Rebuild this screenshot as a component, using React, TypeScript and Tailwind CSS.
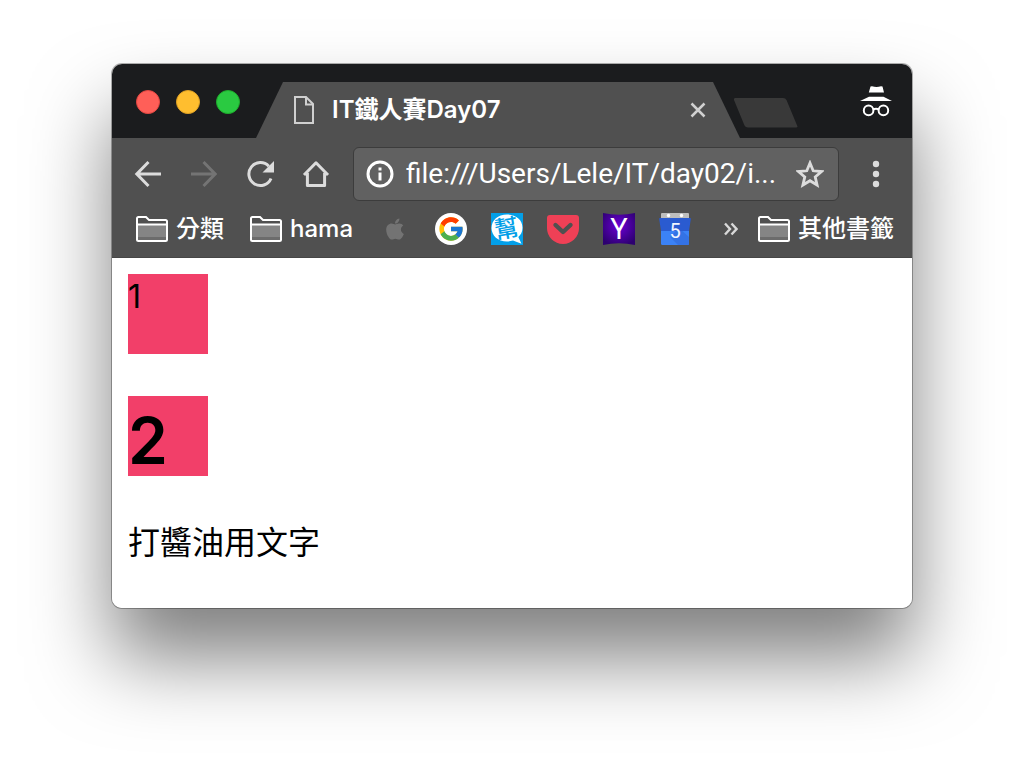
import type { ReactNode } from 'react'
import { FaApple } from 'react-icons/fa'
import { FcGoogle } from 'react-icons/fc'

function FileIcon() {
  return (
    <svg viewBox="0 0 20 28" className="h-7 w-5 shrink-0" fill="none" stroke="#d0d0d0" strokeWidth="2" aria-hidden="true">
      <path d="M1 1h11l7 7v19H1z" />
      <path d="M12 1v7.5h7" />
    </svg>
  )
}

function IncognitoIcon() {
  return (
    <svg viewBox="0 0 32 32" className="size-8" fill="#fff" aria-hidden="true">
      <path d="M10.5 0.5 L12 0.2 Q16.5 1.8 21 0.2 L22.5 0.5 L24 6.5 H8.8z" />
      <path d="M9 10.8h14.5L32 15H0z" />
      <g fill="none" stroke="#fff" strokeWidth="2">
        <circle cx="8.6" cy="24.4" r="4.8" />
        <circle cx="23.4" cy="24.4" r="4.8" />
        <path d="M13 23.6q3-1.6 6 0" />
      </g>
    </svg>
  )
}

function BackIcon() {
  return (
    <svg viewBox="0 0 28 28" className="size-7" fill="none" stroke="currentColor" strokeWidth="3" aria-hidden="true">
      <path d="M27 14H3M14.5 2L2.8 14l11.7 12" />
    </svg>
  )
}

function ForwardIcon() {
  return (
    <svg viewBox="0 0 28 28" className="size-7" fill="none" stroke="currentColor" strokeWidth="3" aria-hidden="true">
      <path d="M1 14h24M13.5 2l11.7 12-11.7 12" />
    </svg>
  )
}

function ReloadIcon() {
  return (
    <svg viewBox="0 0 28 28" className="size-7" fill="none" stroke="currentColor" strokeWidth="3" aria-hidden="true">
      <path d="M22.8 6.2A11.5 11.5 0 1 0 25 18.5" />
      <path d="M28 1v11.5H16.5z" fill="currentColor" stroke="none" />
    </svg>
  )
}

function HomeIcon() {
  return (
    <svg viewBox="0 0 28 28" className="size-7" fill="none" stroke="currentColor" strokeWidth="3" strokeLinejoin="round" aria-hidden="true">
      <path d="M2 15L14 2.8 26 15" />
      <path d="M5.4 13v12.5h17.2V13" />
    </svg>
  )
}

function InfoIcon() {
  return (
    <svg viewBox="0 0 28 28" className="size-7 shrink-0" fill="#fff" aria-hidden="true">
      <circle cx="14" cy="14" r="12" fill="none" stroke="#fff" strokeWidth="3" />
      <path d="M12.5 7.5h3v3h-3zM12.5 12.5h3v8h-3z" />
    </svg>
  )
}

function StarIcon() {
  return (
    <svg viewBox="0 0 28 28" className="size-7" fill="none" stroke="#dcdcdc" strokeWidth="2.8" aria-hidden="true">
      <path d="M14 3l3.2 7.800 8.300.7-6.300 5.400 1.900 8.100-7.100-4.300-7.100 4.300 1.900-8.100-6.300-5.400 8.300-.7z" />
    </svg>
  )
}

function FolderIcon() {
  return (
    <svg viewBox="0 0 32 26" className="h-[26px] w-8 shrink-0" aria-hidden="true">
      <path d="M2 9h28v15H2z" fill="#858585" />
      <path d="M2 21h28v3H2z" fill="#6c6c6c" />
      <path d="M1 8V2.500Q1 1 2.500 1H10l3 3h16.500Q31 4 31 5.500V23.500Q31 25 29.500 25H2.500Q1 25 1 23.500zM1 8.500h30" fill="none" stroke="#fff" strokeWidth="2" />
    </svg>
  )
}

function GoogleIcon() {
  return (
    <span className="flex size-8 items-center justify-center rounded-full bg-white">
      <FcGoogle className="size-7" />
    </span>
  )
}

function HelpIcon() {
  return (
    <svg viewBox="0 0 32 32" className="size-8 overflow-visible" aria-hidden="true">
      <path d="M0 0h32v32H0z" fill="#039fe8" />
      <path d="M16 1.500c9 0 15.500 5.500 15.500 13.200 0 4.300-1.800 7.200-4.200 9.400l3.200 6.700-8.500-3.200c-2 .6-4 .9-6 .9C7 28.500.5 22.500.5 14.900S7 1.500 16 1.500z" fill="#fff" />
      <text x="15.500" y="24" textAnchor="middle" fontSize="24" fontWeight="500" fill="#039fe8" transform="rotate(-10 16 16)" className="font-['Noto_Sans_CJK_TC',sans-serif]">
        幫
      </text>
    </svg>
  )
}

function PocketIcon() {
  return (
    <svg viewBox="0 0 32 32" className="size-8" aria-hidden="true">
      <path d="M3 2h26q3 0 3 3v10a16 16 0 0 1-32 0V5q0-3 3-3z" fill="#ef4056" />
      <path d="M8.500 12l7.500 7 7.500-7" fill="none" stroke="#505050" strokeWidth="4.400" strokeLinecap="round" strokeLinejoin="round" />
    </svg>
  )
}

function YahooIcon() {
  return (
    <svg viewBox="0 0 32 32" className="size-8 overflow-visible" aria-hidden="true">
      <defs>
        <radialGradient id="yahoo" cx="50%" cy="40%" r="65%">
          <stop offset="0" stopColor="#6a00d4" />
          <stop offset="1" stopColor="#2d0070" />
        </radialGradient>
      </defs>
      <path d="M0 0q16 3.500 32 0v32q-16-3.500-32 0z" fill="url(#yahoo)" />
      <text x="16" y="26" textAnchor="middle" fontSize="29" fill="#fff" className="font-[Roboto,sans-serif]">
        Y
      </text>
    </svg>
  )
}

function CalendarIcon() {
  return (
    <svg viewBox="0 0 32 32" className="size-8" aria-hidden="true">
      <path d="M3 0h26q1 0 1 1v6H2V1q0-1 1-1z" fill="#bdbdbd" />
      <circle cx="9.500" cy="2.500" r="1.700" fill="#fff" />
      <circle cx="22.500" cy="2.500" r="1.700" fill="#fff" />
      <path d="M2 14h28v16.500q0 1.500-1.500 1.500h-25Q2 32 2 30.500z" fill="#3b82f6" />
      <path d="M11 24l9-9 10 9v6.500q0 1.500-1.500 1.500H19z" fill="#3472e4" />
      <path d="M1 5h30q1 0 .8 1L30 18H2L.2 6Q0 5 1 5z" fill="#2a5bd0" />
      <text x="16" y="25" textAnchor="middle" fontSize="20" fill="#f2f6ff" className="font-[Roboto,sans-serif]">
        5
      </text>
    </svg>
  )
}

const shortcuts: { label: string; icon: ReactNode }[] = [
  { label: 'Apple', icon: <FaApple className="size-6 text-[#737373]" /> },
  { label: 'Google', icon: <GoogleIcon /> },
  { label: 'iT 邦幫忙', icon: <HelpIcon /> },
  { label: 'Pocket', icon: <PocketIcon /> },
  { label: 'Yahoo', icon: <YahooIcon /> },
  { label: 'Calendar', icon: <CalendarIcon /> },
]

function FolderButton({ children }: { children: ReactNode }) {
  return (
    <button type="button" className="flex shrink-0 items-center gap-2 pr-0.5 text-2xl leading-8 font-medium whitespace-nowrap">
      <FolderIcon />
      {children}
    </button>
  )
}

function TabStrip() {
  return (
    <header className="flex items-end bg-[#1b1c1e] pt-[18px] pr-5 pl-6">
      <div className="mb-6 flex shrink-0 gap-4">
        <button type="button" aria-label="Close window" className="size-6 rounded-full border border-[#e24640] bg-[#ff5f58]" />
        <button type="button" aria-label="Minimize window" className="size-6 rounded-full border border-[#dfa023] bg-[#ffbe2f]" />
        <button type="button" aria-label="Zoom window" className="size-6 rounded-full border border-[#1dad2b] bg-[#2aca41]" />
      </div>
      <div className="ml-4 flex h-14 max-w-[484px] min-w-0 flex-1 items-center bg-[#505050] pr-[34px] pl-[38px] [clip-path:polygon(27px_0,calc(100%_-_27px)_0,100%_100%,0_100%)]">
        <FileIcon />
        <span className="ml-[18px] min-w-0 flex-1 truncate text-2xl leading-8 font-semibold">IT鐵人賽Day07</span>
        <button type="button" aria-label="Close tab">
          <svg viewBox="0 0 16 16" className="size-4" stroke="#d0d0d0" strokeWidth="2.500" aria-hidden="true">
            <path d="M1.500 1.500l13 13M14.500 1.500l-13 13" />
          </svg>
        </button>
      </div>
      <button type="button" aria-label="New tab" className="mb-2.5 -ml-1.5 shrink-0">
        <svg viewBox="0 0 64 30" className="h-[30px] w-16" aria-hidden="true">
          <path d="M1.500 0H49q2.500 0 3.500 2l10.800 26q.7 1.500-1.300 1.500H14q-2.500 0-3.500-2L0 2Q-.5 0 1.500 0z" fill="#393939" />
        </svg>
      </button>
      <div className="mb-5 ml-auto shrink-0">
        <IncognitoIcon />
      </div>
    </header>
  )
}

function Toolbar() {
  return (
    <div className="border-b border-[#464646] bg-[#505050] pt-[9px] pb-3">
      <div className="flex items-center pr-6 pl-[22px] text-[#dcdcdc]">
        <div className="flex shrink-0 gap-7">
          <button type="button" aria-label="Back"><BackIcon /></button>
          <button type="button" aria-label="Forward" className="text-[#747474]"><ForwardIcon /></button>
          <button type="button" aria-label="Reload"><ReloadIcon /></button>
          <button type="button" aria-label="Home"><HomeIcon /></button>
        </div>
        <div className="ml-[23px] flex h-[54px] min-w-0 flex-1 items-center rounded-md border border-[#3c3c3c] bg-[#616161] pr-3.5 pl-3">
          <InfoIcon />
          <input
            type="text"
            aria-label="Address"
            defaultValue="file:///Users/Lele/IT/day02/i..."
            className="ml-3 min-w-0 flex-1 bg-transparent font-[Roboto,sans-serif] text-[28px] leading-9 text-white outline-none"
          />
          <button type="button" aria-label="Bookmark this page"><StarIcon /></button>
        </div>
        <button type="button" aria-label="Menu" className="ml-[25px] shrink-0">
          <svg viewBox="0 0 24 28" className="h-7 w-6" fill="currentColor" aria-hidden="true">
            <circle cx="12" cy="4" r="3.200" />
            <circle cx="12" cy="14" r="3.200" />
            <circle cx="12" cy="24" r="3.200" />
          </svg>
        </button>
      </div>
      <nav aria-label="Bookmarks" className="mt-3 flex h-8 items-center gap-6 pr-4 pl-6">
        <FolderButton>分類</FolderButton>
        <FolderButton>hama</FolderButton>
        {shortcuts.map((s) => (
          <a key={s.label} href="#" aria-label={s.label} className="flex size-8 shrink-0 items-center justify-center">
            {s.icon}
          </a>
        ))}
        <div className="ml-auto flex shrink-0 items-center gap-5">
          <button type="button" aria-label="More bookmarks">
            <svg viewBox="0 0 14 14" className="size-3.5" fill="none" stroke="#d8d8d8" strokeWidth="2.400" aria-hidden="true">
              <path d="M1 1.500L6 7l-5 5.500M7.500 1.500l5 5.500-5 5.500" />
            </svg>
          </button>
          <FolderButton>其他書籤</FolderButton>
        </div>
      </nav>
    </div>
  )
}

export default function App() {
  return (
    <div className="min-h-screen bg-white px-28 py-16 font-[Inter,'Noto_Sans_CJK_TC',sans-serif]">
      <div className="overflow-hidden rounded-[10px] text-white shadow-[0_0_0_1px_rgba(0,0,0,0.3),0_50px_80px_rgba(0,0,0,0.5)]">
        <TabStrip />
        <Toolbar />
        <main className="bg-white px-4 pt-4 pb-10 text-black">
          <div className="size-20 bg-[#f23f69] text-[32px] leading-[46px]">1</div>
          <h1 className="mt-[42px] size-20 bg-[#f23f69] text-[64px] leading-[90px] font-semibold">2</h1>
          <p className="mt-[42px] text-[32px] leading-[50px]">打醬油用文字</p>
        </main>
      </div>
    </div>
  )
}
